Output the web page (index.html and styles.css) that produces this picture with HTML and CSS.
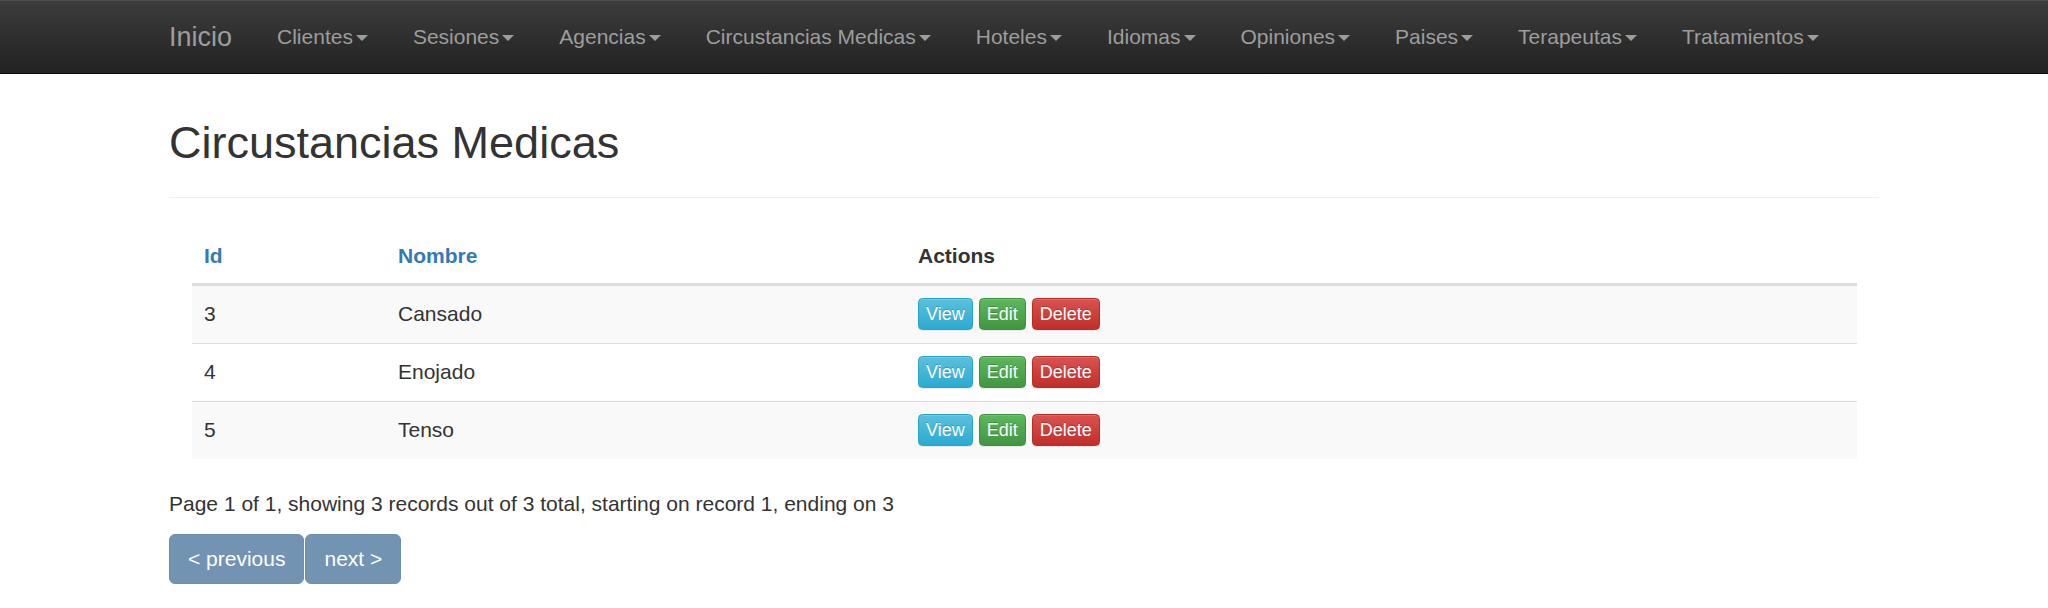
FILE: index.html
```html
<!DOCTYPE html>
<html lang="es">
<head>
<meta charset="utf-8">
<title>Circustancias Medicas</title>
<link rel="stylesheet" href="styles.css">
</head>
<body>
<nav class="navbar">
  <div class="nav-inner">
    <a class="brand" href="#">Inicio</a>
    <ul class="nav">
      <li><a href="#">Clientes<span class="caret"></span></a></li>
      <li><a href="#">Sesiones<span class="caret"></span></a></li>
      <li><a href="#">Agencias<span class="caret"></span></a></li>
      <li><a href="#">Circustancias Medicas<span class="caret"></span></a></li>
      <li><a href="#">Hoteles<span class="caret"></span></a></li>
      <li><a href="#">Idiomas<span class="caret"></span></a></li>
      <li><a href="#">Opiniones<span class="caret"></span></a></li>
      <li><a href="#">Paises<span class="caret"></span></a></li>
      <li><a href="#">Terapeutas<span class="caret"></span></a></li>
      <li><a href="#">Tratamientos<span class="caret"></span></a></li>
    </ul>
  </div>
</nav>
<main class="container">
  <h1 class="page-title">Circustancias Medicas</h1>
  <table class="grid">
    <thead>
      <tr>
        <th class="col-id"><a href="#">Id</a></th>
        <th class="col-name"><a href="#">Nombre</a></th>
        <th>Actions</th>
      </tr>
    </thead>
    <tbody>
      <tr>
        <td>3</td>
        <td>Cansado</td>
        <td><div class="actions"><a class="btn btn-info" href="#">View</a><a class="btn btn-success" href="#">Edit</a><a class="btn btn-danger" href="#">Delete</a></div></td>
      </tr>
      <tr>
        <td>4</td>
        <td>Enojado</td>
        <td><div class="actions"><a class="btn btn-info" href="#">View</a><a class="btn btn-success" href="#">Edit</a><a class="btn btn-danger" href="#">Delete</a></div></td>
      </tr>
      <tr>
        <td>5</td>
        <td>Tenso</td>
        <td><div class="actions"><a class="btn btn-info" href="#">View</a><a class="btn btn-success" href="#">Edit</a><a class="btn btn-danger" href="#">Delete</a></div></td>
      </tr>
    </tbody>
  </table>
  <p class="summary">Page 1 of 1, showing 3 records out of 3 total, starting on record 1, ending on 3</p>
  <div class="pager">
    <a class="pager-btn" href="#">&lt; previous</a>
    <a class="pager-btn" href="#">next &gt;</a>
  </div>
</main>
</body>
</html>
```

FILE: styles.css
```css
html, body {
  margin: 0;
  padding: 0;
}
body {
  font-family: "Liberation Sans", Arial, sans-serif;
  font-size: 21px;
  line-height: 30px;
  color: #333;
  background: #fff;
}
a {
  text-decoration: none;
}

/* navbar */
.navbar {
  height: 73px;
  background: linear-gradient(to bottom, #3c3c3c 0%, #222 100%);
  border-bottom: 1px solid #080808;
  box-shadow: inset 0 1px 0 rgba(255, 255, 255, 0.1);
}
.nav-inner {
  width: 1710px;
  margin: 0 auto;
  height: 100%;
  display: flex;
  align-items: center;
}
.brand {
  font-size: 27px;
  line-height: 30px;
  color: #9d9d9d;
  padding-right: 22.5px;
}
.nav {
  list-style: none;
  margin: 0;
  padding: 0;
  display: flex;
  align-items: center;
}
.nav a {
  display: flex;
  align-items: center;
  padding: 0 22.5px;
  font-size: 21px;
  line-height: 30px;
  color: #9d9d9d;
}
.caret {
  display: inline-block;
  width: 0;
  height: 0;
  margin-left: 3px;
  margin-top: 2px;
  border-top: 6px solid #9d9d9d;
  border-left: 6px solid transparent;
  border-right: 6px solid transparent;
}

/* content */
.container {
  width: 1710px;
  margin: 0 auto;
}
.page-title {
  margin: 44px 0 31px;
  padding-bottom: 29px;
  border-bottom: 1px solid #eee;
  font-size: 45px;
  line-height: 49.5px;
  font-weight: 500;
  color: #333;
}

.grid {
  width: 1665px;
  margin: 0 0 30px 23px;
  border-collapse: collapse;
  border-spacing: 0;
}
.grid th,
.grid td {
  padding: 12px;
  text-align: left;
  vertical-align: middle;
}
.grid th {
  font-weight: bold;
  line-height: 30px;
  border-bottom: 3px solid #ddd;
  vertical-align: bottom;
}
.grid th a {
  color: #337ab7;
}
.col-id {
  width: 170px;
}
.col-name {
  width: 496px;
}
.grid td {
  height: 33px;
  border-top: 1px solid #ddd;
}
.grid tbody tr:first-child td {
  border-top: 0;
}
.grid tbody tr:nth-child(odd) td {
  background: #f9f9f9;
}

.actions {
  display: flex;
  gap: 6px;
}
.btn {
  display: inline-block;
  font-size: 18px;
  line-height: 26px;
  padding: 2px 7px;
  border: 1px solid transparent;
  border-radius: 4.5px;
  color: #fff;
  text-shadow: 0 -1px 0 rgba(0, 0, 0, 0.2);
  box-shadow: inset 0 1px 0 rgba(255, 255, 255, 0.15), 0 1px 1px rgba(0, 0, 0, 0.075);
}
.btn-info {
  background: linear-gradient(to bottom, #5bc0de 0%, #2aabd2 100%);
  border-color: #28a4c9;
}
.btn-success {
  background: linear-gradient(to bottom, #5cb85c 0%, #419641 100%);
  border-color: #3e8f3e;
}
.btn-danger {
  background: linear-gradient(to bottom, #d9534f 0%, #c12e2a 100%);
  border-color: #b92c28;
}

.summary {
  margin: 0 0 15px;
}
.pager {
  display: flex;
  gap: 1px;
}
.pager-btn {
  display: inline-block;
  padding: 9px 18px;
  line-height: 30px;
  font-size: 21px;
  color: #fff;
  background: #7293b1;
  border: 1px solid #6d8fad;
  border-radius: 6px;
}
```
